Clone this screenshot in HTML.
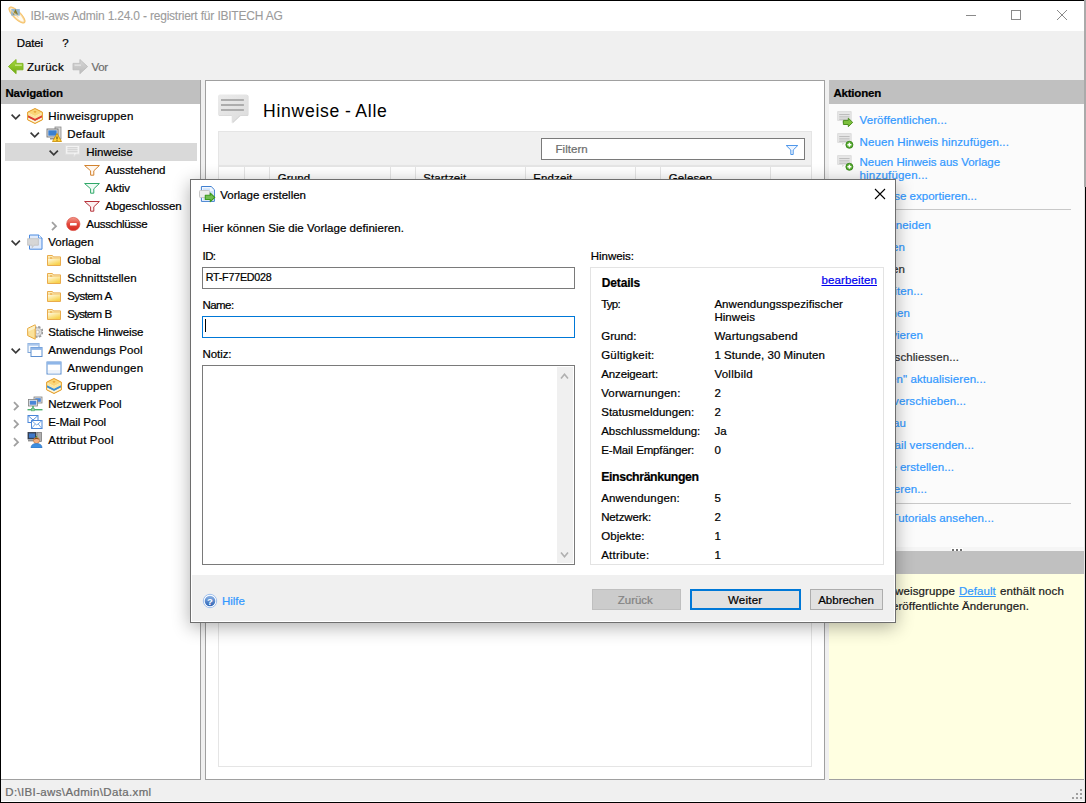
<!DOCTYPE html>
<html lang="de"><head><meta charset="utf-8"><title>IBI-aws Admin</title>
<style>
html,body{margin:0;padding:0;width:1086px;height:803px;overflow:hidden;background:#f0f0f0;}
body{position:relative;font-family:"Liberation Sans", sans-serif;font-size:12px;}
.b{position:absolute;display:block;}
.t{position:absolute;white-space:pre;display:block;-webkit-text-stroke:0.22px;}
</style></head><body>
<div class="b" style="left:0px;top:0px;width:1086px;height:803px;background:#000;"></div>
<div class="b" style="left:1px;top:1px;width:1083px;height:30px;background:#ffffff;"></div>
<div class="b" style="left:1px;top:31px;width:1083px;height:770px;background:#f0f0f0;"></div>
<div class="b" style="left:1px;top:801px;width:1083px;height:1px;background:#ffffff;"></div>
<div class="b" style="left:1084px;top:1px;width:1px;height:801px;background:#e4e4e4;"></div>
<div class="b" style="left:1084px;top:0px;width:2px;height:187px;background:#aaaaaa;"></div>
<div class="b" style="left:8px;top:6px;line-height:0;"><svg width="18" height="18" viewBox="0 0 18 18">
<ellipse cx="9" cy="9" rx="10.2" ry="3.3" transform="rotate(45 9 9)" fill="#fffaf0" stroke="#f9d596" stroke-width="1.9"/>
<ellipse cx="9" cy="9" rx="10.7" ry="3.8" transform="rotate(45 9 9)" fill="none" stroke="#f2b248" stroke-width="0.6" opacity="0.8"/>
<rect x="3.2" y="3" width="8.6" height="6.6" fill="#8db3d4" opacity="0.92"/>
<path d="M5.6 8.4 L7.5 4.4 L9.4 8.4 M6.4 7 H8.6" stroke="#8a7a20" stroke-width="1.1" fill="none"/>
<path d="M3 4.2 L10.5 11.5" stroke="#f9d596" stroke-width="1.1" opacity="0.75"/>
</svg></div>
<span class="t" style="left:30.50px;top:7.60px;font-size:12px;line-height:16px;color:#9b9b9b;letter-spacing:-0.238px;word-spacing:0.238px;-webkit-text-stroke:0.1px;">IBI-aws Admin 1.24.0 - registriert für IBITECH AG</span>
<svg class="b" style="left:960px;top:5px" width="120" height="22" viewBox="0 0 120 22"><g fill="none" stroke="#8a8a8a" stroke-width="1"><path d="M6 10.5 H16"/><rect x="51.5" y="5.5" width="9" height="9"/><path d="M97 5 L107 15 M107 5 L97 15"/></g></svg>
<span class="t" style="left:16.80px;top:34.90px;font-size:11.5px;line-height:16px;color:#000;letter-spacing:-0.152px;">Datei</span>
<span class="t" style="left:62.20px;top:34.90px;font-size:11.5px;line-height:16px;color:#000;letter-spacing:-1.606px;">?</span>
<div class="b" style="left:8px;top:59px;line-height:0;"><svg width="16" height="16" viewBox="0 0 16 16">
<defs><linearGradient id="gb" x1="0" y1="0" x2="0" y2="1"><stop offset="0" stop-color="#a6d63c"/><stop offset="0.5" stop-color="#8cc42a"/><stop offset="1" stop-color="#6ea814"/></linearGradient></defs>
<path d="M0.4 7.6 L8.1 0.5 L8.1 4.4 L15 4.4 L15 10.8 L8.1 10.8 L8.1 14.7 Z" fill="url(#gb)" stroke="#7db31e" stroke-width="0.9" stroke-linejoin="round"/>
<path d="M7 6.2 H13.8" stroke="#c9e886" stroke-width="1.4"/>
</svg></div>
<span class="t" style="left:27.00px;top:59.00px;font-size:11.5px;line-height:16px;color:#000;letter-spacing:0.307px;">Zurück</span>
<div class="b" style="left:71.5px;top:59px;line-height:0;"><svg width="16" height="16" viewBox="0 0 16 16">
<defs><linearGradient id="gf" x1="0" y1="0" x2="0" y2="1"><stop offset="0" stop-color="#d6d6d6"/><stop offset="1" stop-color="#bcbcbc"/></linearGradient></defs>
<path d="M15.6 7.6 L7.9 0.5 L7.9 4.4 L1 4.4 L1 10.8 L7.9 10.8 L7.9 14.7 Z" fill="url(#gf)" stroke="#bdbdbd" stroke-width="0.9" stroke-linejoin="round"/>
<path d="M2.6 6.2 H9" stroke="#e2e2e2" stroke-width="1.4"/>
</svg></div>
<span class="t" style="left:91.40px;top:59.00px;font-size:11.5px;line-height:16px;color:#6d6d6d;letter-spacing:-0.289px;">Vor</span>
<div class="b" style="left:1px;top:80px;width:200px;height:700px;background:#ffffff;"></div>
<div class="b" style="left:200px;top:80px;width:1px;height:700px;background:#a0a0a0;"></div>
<div class="b" style="left:1px;top:779px;width:200px;height:1px;background:#a0a0a0;"></div>
<div class="b" style="left:1px;top:80px;width:199px;height:24px;background:#c0c0c0;"></div>
<span class="t" style="left:5.40px;top:84.80px;font-size:11.5px;line-height:16px;color:#000;font-weight:bold;letter-spacing:-0.120px;">Navigation</span>
<div class="b" style="left:5px;top:143px;width:192px;height:18px;background:#d9d9d9;"></div>
<svg class="b" style="left:11px;top:113px" width="10" height="8" viewBox="0 0 10 8"><path d="M0.6 1.6 L4.75 5.8 L8.9 1.6" fill="none" stroke="#3a3a3a" stroke-width="1.7"/></svg>
<div class="b" style="left:27px;top:108px;line-height:0;"><svg width="16" height="16" viewBox="0 0 16 16">
<path d="M8 0.6 L15.4 4.3 L15.4 11.7 L8 15.4 L0.6 11.7 L0.6 4.3 Z" fill="#fdf3cf" stroke="#e6a63a" stroke-width="1" stroke-linejoin="round"/>
<path d="M1 4.5 L8 8 L15 4.5 L8 1 Z" fill="#f9d678"/>
<path d="M1 4.7 L8 8.2 L15 4.7 L15 7 L8 10.5 L1 7 Z" fill="#fbe59c"/>
<path d="M1 7.3 L8 10.8 L15 7.3 L15 9.6 L8 13.1 L1 9.6 Z" fill="#dc3d30"/>
<path d="M1 9.8 L8 13.3 L15 9.8 L15 11.6 L8 15 L1 11.6 Z" fill="#fdf6dc"/>
<path d="M6.4 3.8 L8 2.7 L9.6 3.8 L8 4.9Z" fill="#e6a63a"/>
<path d="M8 0.6 L15.4 4.3 L15.4 11.7 L8 15.4 L0.6 11.7 L0.6 4.3 Z" fill="none" stroke="#e6a63a" stroke-width="1" stroke-linejoin="round"/>
</svg></div>
<span class="t" style="left:48.30px;top:107.60px;font-size:11.5px;line-height:16px;color:#000;letter-spacing:0.195px;">Hinweisgruppen</span>
<svg class="b" style="left:30px;top:131px" width="10" height="8" viewBox="0 0 10 8"><path d="M0.6 1.6 L4.75 5.8 L8.9 1.6" fill="none" stroke="#3a3a3a" stroke-width="1.7"/></svg>
<div class="b" style="left:46px;top:126px;line-height:0;"><svg width="16" height="16" viewBox="0 0 16 16">
<rect x="9" y="1" width="6" height="12" fill="#d8d8d8" stroke="#8a8a8a" stroke-width="0.8"/>
<rect x="1" y="3" width="11" height="8" fill="#e8e8e8" stroke="#707070" stroke-width="0.9"/>
<rect x="2.3" y="4.3" width="8.4" height="5.4" fill="#3b7fd0"/>
<rect x="4" y="12" width="5" height="1.5" fill="#909090"/>
<path d="M11 7.5 L15.5 15.5 L6.5 15.5 Z" fill="#ffd23b" stroke="#c98a00" stroke-width="0.8"/>
<rect x="10.5" y="10.5" width="1" height="2.6" fill="#5a3c00"/><rect x="10.5" y="13.7" width="1" height="1" fill="#5a3c00"/>
</svg></div>
<span class="t" style="left:67.30px;top:125.60px;font-size:11.5px;line-height:16px;color:#000;letter-spacing:0.180px;">Default</span>
<svg class="b" style="left:49px;top:149px" width="10" height="8" viewBox="0 0 10 8"><path d="M0.6 1.6 L4.75 5.8 L8.9 1.6" fill="none" stroke="#3a3a3a" stroke-width="1.7"/></svg>
<div class="b" style="left:65px;top:144px;line-height:0;"><svg width="16" height="16" viewBox="0 0 16 16">
<path d="M0.5 1.5 H14.5 V10.2 H11 L8.8 13 L8.8 10.2 H0.5 Z" fill="#f3f3f3" stroke="#dedede" stroke-width="0.9" stroke-linejoin="round"/>
<path d="M2.4 3.8 H12.6 M2.4 5.8 H12.6 M2.4 7.8 H12.6" stroke="#c9c9c9" stroke-width="1"/>
</svg></div>
<span class="t" style="left:86.30px;top:143.60px;font-size:11.5px;line-height:16px;color:#000;letter-spacing:-0.046px;">Hinweise</span>
<div class="b" style="left:84px;top:162px;line-height:0;"><svg width="16" height="16" viewBox="0 0 16 16"><path d="M0.6 3.5 H15.4 L9.8 8.8 V13.2 H6.6 V8.8 Z" fill="#fff8f0" stroke="#d2822e" stroke-width="1" stroke-linejoin="round"/></svg></div>
<span class="t" style="left:105.30px;top:161.60px;font-size:11.5px;line-height:16px;color:#000;letter-spacing:-0.065px;">Ausstehend</span>
<div class="b" style="left:84px;top:180px;line-height:0;"><svg width="16" height="16" viewBox="0 0 16 16"><path d="M0.6 3.5 H15.4 L9.8 8.8 V13.2 H6.6 V8.8 Z" fill="#f0fbf5" stroke="#2fa868" stroke-width="1" stroke-linejoin="round"/></svg></div>
<span class="t" style="left:105.30px;top:179.60px;font-size:11.5px;line-height:16px;color:#000;letter-spacing:-0.044px;">Aktiv</span>
<div class="b" style="left:84px;top:198px;line-height:0;"><svg width="16" height="16" viewBox="0 0 16 16"><path d="M0.6 3.5 H15.4 L9.8 8.8 V13.2 H6.6 V8.8 Z" fill="#fdf1f1" stroke="#b6323a" stroke-width="1" stroke-linejoin="round"/></svg></div>
<span class="t" style="left:105.30px;top:197.60px;font-size:11.5px;line-height:16px;color:#000;letter-spacing:-0.146px;">Abgeschlossen</span>
<svg class="b" style="left:51px;top:221px" width="7" height="10" viewBox="0 0 7 10"><path d="M1 1.2 L5 5.2 L1 9.2" fill="none" stroke="#a0a0a0" stroke-width="1.8"/></svg>
<div class="b" style="left:65px;top:216px;line-height:0;"><svg width="16" height="16" viewBox="0 0 16 16">
<defs><linearGradient id="gs" x1="0" y1="0" x2="0" y2="1"><stop offset="0" stop-color="#f39a8c"/><stop offset="0.5" stop-color="#e4483c"/><stop offset="1" stop-color="#d6291f"/></linearGradient></defs>
<circle cx="8.3" cy="8" r="6.6" fill="url(#gs)" stroke="#d9493e" stroke-width="0.7"/>
<rect x="5" y="7" width="6.7" height="2.5" rx="0.5" fill="#ffffff"/>
</svg></div>
<span class="t" style="left:86.30px;top:215.60px;font-size:11.5px;line-height:16px;color:#000;letter-spacing:-0.324px;">Ausschlüsse</span>
<svg class="b" style="left:11px;top:239px" width="10" height="8" viewBox="0 0 10 8"><path d="M0.6 1.6 L4.75 5.8 L8.9 1.6" fill="none" stroke="#3a3a3a" stroke-width="1.7"/></svg>
<div class="b" style="left:27px;top:234px;line-height:0;"><svg width="16" height="16" viewBox="0 0 16 16">
<path d="M2.5 1 H11.5 L15 4 V15.2 H2.5 Z" fill="#dfeafb" stroke="#4a8ae0" stroke-width="1" stroke-linejoin="round"/>
<path d="M11.5 1 V4 H15" fill="#ffffff" stroke="#4a8ae0" stroke-width="0.8"/>
<path d="M0.6 4.7 H11.4 V11.2 H7 L5.2 13.7 V11.2 H0.6 Z" fill="#d6d6d6" stroke="#c0c0c0" stroke-width="0.8" stroke-linejoin="round"/>
</svg></div>
<span class="t" style="left:48.30px;top:233.60px;font-size:11.5px;line-height:16px;color:#000;letter-spacing:-0.013px;">Vorlagen</span>
<div class="b" style="left:46px;top:252px;line-height:0;"><svg width="16" height="16" viewBox="0 0 16 16">
<defs><linearGradient id="gfo" x1="0" y1="0" x2="0.6" y2="1"><stop offset="0" stop-color="#fffbe8"/><stop offset="1" stop-color="#f8d24e"/></linearGradient></defs>
<path d="M1.5 3.5 H6.4 L7.4 4.9 H14.5 V13.5 H1.5 Z" fill="#fdeeb8" stroke="#e9ab4c" stroke-width="1" stroke-linejoin="round"/>
<path d="M2 6.6 H14 V13 H2 Z" fill="url(#gfo)"/>
<path d="M2 6.2 H14" stroke="#f2c46a" stroke-width="0.8"/>
<rect x="4" y="5.2" width="2.2" height="1.6" fill="#e9ab4c" opacity="0.8"/>
</svg></div>
<span class="t" style="left:67.30px;top:251.60px;font-size:11.5px;line-height:16px;color:#000;letter-spacing:0.025px;">Global</span>
<div class="b" style="left:46px;top:270px;line-height:0;"><svg width="16" height="16" viewBox="0 0 16 16">
<defs><linearGradient id="gfo" x1="0" y1="0" x2="0.6" y2="1"><stop offset="0" stop-color="#fffbe8"/><stop offset="1" stop-color="#f8d24e"/></linearGradient></defs>
<path d="M1.5 3.5 H6.4 L7.4 4.9 H14.5 V13.5 H1.5 Z" fill="#fdeeb8" stroke="#e9ab4c" stroke-width="1" stroke-linejoin="round"/>
<path d="M2 6.6 H14 V13 H2 Z" fill="url(#gfo)"/>
<path d="M2 6.2 H14" stroke="#f2c46a" stroke-width="0.8"/>
<rect x="4" y="5.2" width="2.2" height="1.6" fill="#e9ab4c" opacity="0.8"/>
</svg></div>
<span class="t" style="left:67.30px;top:269.60px;font-size:11.5px;line-height:16px;color:#000;letter-spacing:0.064px;">Schnittstellen</span>
<div class="b" style="left:46px;top:288px;line-height:0;"><svg width="16" height="16" viewBox="0 0 16 16">
<defs><linearGradient id="gfo" x1="0" y1="0" x2="0.6" y2="1"><stop offset="0" stop-color="#fffbe8"/><stop offset="1" stop-color="#f8d24e"/></linearGradient></defs>
<path d="M1.5 3.5 H6.4 L7.4 4.9 H14.5 V13.5 H1.5 Z" fill="#fdeeb8" stroke="#e9ab4c" stroke-width="1" stroke-linejoin="round"/>
<path d="M2 6.6 H14 V13 H2 Z" fill="url(#gfo)"/>
<path d="M2 6.2 H14" stroke="#f2c46a" stroke-width="0.8"/>
<rect x="4" y="5.2" width="2.2" height="1.6" fill="#e9ab4c" opacity="0.8"/>
</svg></div>
<span class="t" style="left:67.30px;top:287.60px;font-size:11.5px;line-height:16px;color:#000;letter-spacing:-0.611px;word-spacing:0.611px;">System A</span>
<div class="b" style="left:46px;top:306px;line-height:0;"><svg width="16" height="16" viewBox="0 0 16 16">
<defs><linearGradient id="gfo" x1="0" y1="0" x2="0.6" y2="1"><stop offset="0" stop-color="#fffbe8"/><stop offset="1" stop-color="#f8d24e"/></linearGradient></defs>
<path d="M1.5 3.5 H6.4 L7.4 4.9 H14.5 V13.5 H1.5 Z" fill="#fdeeb8" stroke="#e9ab4c" stroke-width="1" stroke-linejoin="round"/>
<path d="M2 6.6 H14 V13 H2 Z" fill="url(#gfo)"/>
<path d="M2 6.2 H14" stroke="#f2c46a" stroke-width="0.8"/>
<rect x="4" y="5.2" width="2.2" height="1.6" fill="#e9ab4c" opacity="0.8"/>
</svg></div>
<span class="t" style="left:67.30px;top:305.60px;font-size:11.5px;line-height:16px;color:#000;letter-spacing:-0.703px;word-spacing:0.703px;">System B</span>
<div class="b" style="left:27px;top:324px;line-height:0;"><svg width="16" height="16" viewBox="0 0 16 16">
<circle cx="10.6" cy="8" r="4.7" fill="none" stroke="#9a9a9a" stroke-width="2.6" stroke-dasharray="2.1 1.59"/>
<circle cx="10.6" cy="8" r="4.3" fill="#dedede" stroke="#a4a4a4" stroke-width="0.8"/>
<circle cx="10.6" cy="8" r="1.7" fill="#f8f8f8" stroke="#a4a4a4" stroke-width="0.6"/>
<path d="M8.2 0.8 L0.7 4.4 V11.6 L8.2 15.2 Z" fill="#fbe29a" stroke="#e6a63a" stroke-width="1" stroke-linejoin="round"/>
<path d="M8 1.6 L1.4 4.8 V7.4 L8 4.4 Z" fill="#fdf1c6"/>
</svg></div>
<span class="t" style="left:48.30px;top:323.60px;font-size:11.5px;line-height:16px;color:#000;letter-spacing:-0.127px;word-spacing:0.127px;">Statische Hinweise</span>
<svg class="b" style="left:11px;top:347px" width="10" height="8" viewBox="0 0 10 8"><path d="M0.6 1.6 L4.75 5.8 L8.9 1.6" fill="none" stroke="#3a3a3a" stroke-width="1.7"/></svg>
<div class="b" style="left:27px;top:342px;line-height:0;"><svg width="16" height="16" viewBox="0 0 16 16">
<rect x="1" y="1.5" width="11" height="9" fill="#f4f8fd" stroke="#7fa6d8" stroke-width="1"/>
<rect x="1" y="1.5" width="11" height="2.2" fill="#a9c6ec"/>
<rect x="4" y="5.5" width="11" height="9" fill="#ffffff" stroke="#5d8fd0" stroke-width="1"/>
<rect x="4" y="5.5" width="11" height="2.4" fill="#8fb6e8"/>
</svg></div>
<span class="t" style="left:48.30px;top:341.60px;font-size:11.5px;line-height:16px;color:#000;letter-spacing:0.120px;word-spacing:-0.120px;">Anwendungs Pool</span>
<div class="b" style="left:46px;top:360px;line-height:0;"><svg width="16" height="16" viewBox="0 0 16 16">
<rect x="1" y="2" width="14" height="12" fill="#ffffff" stroke="#5d8fd0" stroke-width="1"/>
<rect x="1" y="2" width="14" height="2.6" fill="#8fb6e8"/>
<rect x="2" y="10" width="12" height="3.4" fill="#eef3fa"/>
</svg></div>
<span class="t" style="left:67.30px;top:359.60px;font-size:11.5px;line-height:16px;color:#000;letter-spacing:0.223px;">Anwendungen</span>
<div class="b" style="left:46px;top:378px;line-height:0;"><svg width="16" height="16" viewBox="0 0 16 16">
<path d="M8 0.6 L15.4 4.3 L15.4 11.7 L8 15.4 L0.6 11.7 L0.6 4.3 Z" fill="#fdf3cf" stroke="#e6a63a" stroke-width="1" stroke-linejoin="round"/>
<path d="M1 4.5 L8 8 L15 4.5 L8 1 Z" fill="#f9d678"/>
<path d="M1 4.7 L8 8.2 L15 4.7 L15 7 L8 10.5 L1 7 Z" fill="#fbe59c"/>
<path d="M1 7.3 L8 10.8 L15 7.3 L15 9.6 L8 13.1 L1 9.6 Z" fill="#3d8fd1"/>
<path d="M1 9.8 L8 13.3 L15 9.8 L15 11.6 L8 15 L1 11.6 Z" fill="#fdf6dc"/>
<path d="M6.4 3.8 L8 2.7 L9.6 3.8 L8 4.9Z" fill="#e6a63a"/>
<path d="M8 0.6 L15.4 4.3 L15.4 11.7 L8 15.4 L0.6 11.7 L0.6 4.3 Z" fill="none" stroke="#e6a63a" stroke-width="1" stroke-linejoin="round"/>
</svg></div>
<span class="t" style="left:67.30px;top:377.60px;font-size:11.5px;line-height:16px;color:#000;letter-spacing:0.033px;">Gruppen</span>
<svg class="b" style="left:13px;top:401px" width="7" height="10" viewBox="0 0 7 10"><path d="M1 1.2 L5 5.2 L1 9.2" fill="none" stroke="#a0a0a0" stroke-width="1.8"/></svg>
<div class="b" style="left:27px;top:396px;line-height:0;"><svg width="16" height="16" viewBox="0 0 16 16">
<rect x="7" y="1" width="8" height="6" fill="#e6e6e6" stroke="#808080" stroke-width="0.8"/>
<rect x="8.2" y="2.2" width="5.6" height="3.6" fill="#4a86d8"/>
<rect x="1.5" y="3.5" width="9" height="6.5" fill="#e6e6e6" stroke="#808080" stroke-width="0.8"/>
<rect x="2.8" y="4.8" width="6.4" height="3.9" fill="#4a86d8"/>
<rect x="5.2" y="10" width="1.6" height="3" fill="#4cae6a"/>
<rect x="0.5" y="13" width="15" height="1.4" fill="#4cae6a"/>
<rect x="4.5" y="12.3" width="3" height="2.6" fill="#9ad0a8" stroke="#4cae6a" stroke-width="0.5"/>
</svg></div>
<span class="t" style="left:48.30px;top:395.60px;font-size:11.5px;line-height:16px;color:#000;letter-spacing:-0.078px;word-spacing:0.078px;">Netzwerk Pool</span>
<svg class="b" style="left:13px;top:419px" width="7" height="10" viewBox="0 0 7 10"><path d="M1 1.2 L5 5.2 L1 9.2" fill="none" stroke="#a0a0a0" stroke-width="1.8"/></svg>
<div class="b" style="left:27px;top:414px;line-height:0;"><svg width="16" height="16" viewBox="0 0 16 16">
<rect x="1" y="1.5" width="10" height="7" fill="#ffffff" stroke="#4a86d8" stroke-width="1"/>
<path d="M1 1.5 L6 6 L11 1.5" fill="none" stroke="#4a86d8" stroke-width="0.9"/>
<rect x="4.5" y="6.5" width="10.5" height="8" fill="#ffffff" stroke="#4a86d8" stroke-width="1"/>
<path d="M4.5 6.5 L9.75 11 L15 6.5 M4.5 14.5 L8.3 10 M15 14.5 L11.2 10" fill="none" stroke="#6a9fe0" stroke-width="0.9"/>
</svg></div>
<span class="t" style="left:48.30px;top:413.60px;font-size:11.5px;line-height:16px;color:#000;letter-spacing:-0.121px;word-spacing:0.121px;">E-Mail Pool</span>
<svg class="b" style="left:13px;top:437px" width="7" height="10" viewBox="0 0 7 10"><path d="M1 1.2 L5 5.2 L1 9.2" fill="none" stroke="#a0a0a0" stroke-width="1.8"/></svg>
<div class="b" style="left:27px;top:432px;line-height:0;"><svg width="16" height="16" viewBox="0 0 16 16">
<rect x="1" y="0.5" width="8" height="6.5" fill="#3c4a60" stroke="#2a3446" stroke-width="0.8"/>
<rect x="2" y="1.5" width="6" height="4.3" fill="#3f78c8"/>
<rect x="10" y="0.5" width="4.5" height="9" fill="#b0b0b0" stroke="#707070" stroke-width="0.7"/>
<rect x="1" y="7.8" width="8" height="1.6" fill="#909090"/>
<circle cx="9.5" cy="8.5" r="3" fill="#f4b183" stroke="#c5712a" stroke-width="0.6"/>
<path d="M6.5 7.5 Q9.5 4 12.5 7.5 Q9.5 6.5 6.5 7.5Z" fill="#8a4a14"/>
<path d="M4 16 Q4 11.5 9.5 11.5 Q15 11.5 15 16 Z" fill="#3d8fe0" stroke="#2a6ab8" stroke-width="0.6"/>
<rect x="9" y="4" width="1" height="1.5" fill="#3aa03a"/>
</svg></div>
<span class="t" style="left:48.30px;top:431.60px;font-size:11.5px;line-height:16px;color:#000;letter-spacing:0.237px;word-spacing:-0.237px;">Attribut Pool</span>
<div class="b" style="left:205px;top:80px;width:620px;height:700px;background:#ffffff;border:1px solid #a0a0a0;box-sizing:border-box;"></div>
<div class="b" style="left:218px;top:94px;line-height:0;"><svg width="32" height="32" viewBox="0 0 32 32">
<defs><linearGradient id="bg1" x1="0" y1="0" x2="1" y2="1"><stop offset="0" stop-color="#ebebeb"/><stop offset="1" stop-color="#dcdcdc"/></linearGradient>
<filter id="bs" x="-10%" y="-10%" width="125%" height="125%"><feGaussianBlur stdDeviation="0.7"/></filter></defs>
<path d="M2 1 H29 Q30.5 1 30.5 2.5 V20.5 Q30.5 22 29 22 H22.5 L14.5 29.6 V22 H2 Q0.5 22 0.5 20.5 V2.5 Q0.5 1 2 1 Z" fill="#cfcfcf" filter="url(#bs)" opacity="0.9"/>
<path d="M1.8 0.4 H28.4 Q29.9 0.4 29.9 1.9 V19.9 Q29.9 21.4 28.4 21.4 H21.7 L13.7 28.9 V21.4 H1.8 Q0.3 21.4 0.3 19.9 V1.9 Q0.3 0.4 1.8 0.4 Z" fill="url(#bg1)"/>
<path d="M3 6 H25.9 M3 10.9 H25.9 M3 15.9 H25.9" stroke="#adadad" stroke-width="2"/>
</svg></div>
<span class="t" style="left:263.00px;top:99.60px;font-size:17.6px;line-height:23px;color:#000;letter-spacing:0.701px;word-spacing:-0.701px;-webkit-text-stroke:0;">Hinweise - Alle</span>
<div class="b" style="left:218px;top:131px;width:594px;height:35px;background:#f0f0f0;border:1px solid #e5e5e5;box-sizing:border-box;"></div>
<div class="b" style="left:541px;top:138px;width:264px;height:22px;background:#ffffff;border:1px solid #7a7a7a;box-sizing:border-box;"></div>
<span class="t" style="left:555.50px;top:141.40px;font-size:11.5px;line-height:16px;color:#6d6d6d;letter-spacing:0.050px;">Filtern</span>
<div class="b" style="left:785px;top:144px;line-height:0;"><svg width="14" height="12" viewBox="0 0 14 12"><path d="M1.2 1.5 H12.8 L8.2 6 V10.5 H5.8 V6 Z" fill="#eef5ff" stroke="#4f97ea" stroke-width="1" stroke-linejoin="round"/></svg></div>
<div class="b" style="left:218px;top:166px;width:594px;height:601px;background:#ffffff;border:1px solid #e5e5e5;box-sizing:border-box;"></div>
<div class="b" style="left:244px;top:166px;width:1px;height:20px;background:#e5e5e5;"></div>
<div class="b" style="left:269px;top:166px;width:1px;height:20px;background:#e5e5e5;"></div>
<div class="b" style="left:390px;top:166px;width:1px;height:20px;background:#e5e5e5;"></div>
<div class="b" style="left:415px;top:166px;width:1px;height:20px;background:#e5e5e5;"></div>
<div class="b" style="left:525px;top:166px;width:1px;height:20px;background:#e5e5e5;"></div>
<div class="b" style="left:635px;top:166px;width:1px;height:20px;background:#e5e5e5;"></div>
<div class="b" style="left:660px;top:166px;width:1px;height:20px;background:#e5e5e5;"></div>
<div class="b" style="left:770px;top:166px;width:1px;height:20px;background:#e5e5e5;"></div>
<span class="t" style="left:277.70px;top:170.30px;font-size:11.5px;line-height:16px;color:#000;letter-spacing:0.111px;">Grund</span>
<span class="t" style="left:423.30px;top:170.30px;font-size:11.5px;line-height:16px;color:#000;letter-spacing:0.082px;">Startzeit</span>
<span class="t" style="left:533.30px;top:170.30px;font-size:11.5px;line-height:16px;color:#000;letter-spacing:0.095px;">Endzeit</span>
<span class="t" style="left:668.80px;top:170.30px;font-size:11.5px;line-height:16px;color:#000;letter-spacing:0.106px;">Gelesen</span>
<div class="b" style="left:829px;top:80px;width:255px;height:467px;background:#fbfbfb;"></div>
<div class="b" style="left:829px;top:80px;width:255px;height:24px;background:#c0c0c0;"></div>
<span class="t" style="left:833.40px;top:84.90px;font-size:11.5px;line-height:16px;color:#000;font-weight:bold;letter-spacing:-0.200px;">Aktionen</span>
<div class="b" style="left:837px;top:111px;line-height:0;"><svg width="17" height="17" viewBox="0 0 17 17"><path d="M0.6 0.6 H14.2 V9.4 H7.6 L5.6 11.6 V9.4 H0.6 Z" fill="#e7e7e7" stroke="#d8d8d8" stroke-width="0.8" stroke-linejoin="round"/>
<path d="M2.2 3.6 H12.6 M2.2 5.9 H12.6 M2.2 8.2 H12.6" stroke="#b9b9b9" stroke-width="1"/>
<path d="M15.7 11.4 L11.3 7.2 V9.4 H6.4 V13.5 H11.3 V15.7 Z" fill="#7cc03c" stroke="#4b8f1e" stroke-width="1" stroke-linejoin="round"/>
</svg></div>
<span class="t" style="left:859.50px;top:112.00px;font-size:11.5px;line-height:16px;color:#3399ff;letter-spacing:0.113px;">Veröffentlichen...</span>
<div class="b" style="left:837px;top:133px;line-height:0;"><svg width="17" height="17" viewBox="0 0 17 17"><path d="M0.6 0.6 H14.2 V9.4 H7.6 L5.6 11.6 V9.4 H0.6 Z" fill="#e7e7e7" stroke="#d8d8d8" stroke-width="0.8" stroke-linejoin="round"/>
<path d="M2.2 3.6 H12.6 M2.2 5.9 H12.6 M2.2 8.2 H12.6" stroke="#b9b9b9" stroke-width="1"/>
<circle cx="12.4" cy="11.8" r="3.5" fill="#58ae2e" stroke="#35821a" stroke-width="0.9"/>
<path d="M12.4 9.8 V13.8 M10.4 11.8 H14.4" stroke="#ffffff" stroke-width="1.5"/>
</svg></div>
<span class="t" style="left:859.50px;top:134.00px;font-size:11.5px;line-height:16px;color:#3399ff;letter-spacing:0.124px;word-spacing:-0.124px;">Neuen Hinweis hinzufügen...</span>
<div class="b" style="left:837px;top:155px;line-height:0;"><svg width="17" height="17" viewBox="0 0 17 17"><path d="M0.6 0.6 H14.2 V9.4 H7.6 L5.6 11.6 V9.4 H0.6 Z" fill="#e7e7e7" stroke="#d8d8d8" stroke-width="0.8" stroke-linejoin="round"/>
<path d="M2.2 3.6 H12.6 M2.2 5.9 H12.6 M2.2 8.2 H12.6" stroke="#b9b9b9" stroke-width="1"/>
<circle cx="12.4" cy="11.8" r="3.5" fill="#58ae2e" stroke="#35821a" stroke-width="0.9"/>
<path d="M12.4 9.8 V13.8 M10.4 11.8 H14.4" stroke="#ffffff" stroke-width="1.5"/>
</svg></div>
<span class="t" style="left:859.50px;top:154.00px;font-size:11.5px;line-height:16px;color:#3399ff;letter-spacing:-0.036px;word-spacing:0.036px;">Neuen Hinweis aus Vorlage</span>
<span class="t" style="left:859.50px;top:167.00px;font-size:11.5px;line-height:16px;color:#3399ff;letter-spacing:0.203px;">hinzufügen...</span>
<span class="t" style="left:859.50px;top:188.00px;font-size:11.5px;line-height:16px;color:#3399ff;letter-spacing:0.023px;word-spacing:-0.023px;">Hinweise exportieren...</span>
<div class="b" style="left:843px;top:209px;width:228px;height:1px;background:#c8c8c8;"></div>
<span class="t" style="left:857.49px;top:217.00px;font-size:11.5px;line-height:16px;color:#3399ff;letter-spacing:0.105px;">Ausschneiden</span>
<span class="t" style="left:858.15px;top:239.00px;font-size:11.5px;line-height:16px;color:#3399ff;letter-spacing:0.100px;">Kopieren</span>
<span class="t" style="left:858.80px;top:261.00px;font-size:11.5px;line-height:16px;color:#303030;letter-spacing:0.099px;">Einfügen</span>
<span class="t" style="left:856.65px;top:283.00px;font-size:11.5px;line-height:16px;color:#3399ff;letter-spacing:0.087px;">Bearbeiten...</span>
<span class="t" style="left:865.76px;top:305.00px;font-size:11.5px;line-height:16px;color:#3399ff;letter-spacing:0.108px;">Löschen</span>
<span class="t" style="left:871.62px;top:327.00px;font-size:11.5px;line-height:16px;color:#3399ff;letter-spacing:0.088px;">Aktivieren</span>
<span class="t" style="left:880.30px;top:349.00px;font-size:11.5px;line-height:16px;color:#303030;letter-spacing:0.090px;">Abschliessen...</span>
<span class="t" style="left:855.42px;top:371.00px;font-size:11.5px;line-height:16px;color:#3399ff;letter-spacing:0.089px;word-spacing:-0.089px;">&quot;Gelesen&quot; aktualisieren...</span>
<span class="t" style="left:870.40px;top:393.00px;font-size:11.5px;line-height:16px;color:#3399ff;letter-spacing:0.091px;word-spacing:-0.091px;">Zeit verschieben...</span>
<span class="t" style="left:857.21px;top:415.00px;font-size:11.5px;line-height:16px;color:#3399ff;letter-spacing:0.104px;">Vorschau</span>
<span class="t" style="left:873.20px;top:437.00px;font-size:11.5px;line-height:16px;color:#3399ff;letter-spacing:0.096px;word-spacing:-0.096px;">E-Mail versenden...</span>
<span class="t" style="left:857.08px;top:459.00px;font-size:11.5px;line-height:16px;color:#3399ff;letter-spacing:0.087px;word-spacing:-0.087px;">Vorlage erstellen...</span>
<span class="t" style="left:858.07px;top:481.00px;font-size:11.5px;line-height:16px;color:#3399ff;letter-spacing:0.084px;">Importieren...</span>
<div class="b" style="left:843px;top:503px;width:228px;height:1px;background:#c8c8c8;"></div>
<span class="t" style="left:858.91px;top:510.00px;font-size:11.5px;line-height:16px;color:#3399ff;letter-spacing:0.096px;word-spacing:-0.096px;">Video Tutorials ansehen...</span>
<div class="b" style="left:829px;top:547px;width:255px;height:4px;background:#f5f5f5;"></div>
<div class="b" style="left:951px;top:548px;width:4px;height:4px;background:#ffffff;"></div>
<div class="b" style="left:955px;top:548px;width:4px;height:4px;background:#ffffff;"></div>
<div class="b" style="left:959px;top:548px;width:4px;height:4px;background:#ffffff;"></div>
<div class="b" style="left:952px;top:549px;width:2px;height:2px;background:#707070;"></div>
<div class="b" style="left:956px;top:549px;width:2px;height:2px;background:#707070;"></div>
<div class="b" style="left:960px;top:549px;width:2px;height:2px;background:#707070;"></div>
<div class="b" style="left:829px;top:551px;width:255px;height:23px;background:#c0c0c0;"></div>
<div class="b" style="left:829px;top:574px;width:255px;height:205px;background:#ffffe1;"></div>
<div class="b" style="left:829px;top:779px;width:255px;height:1px;background:#a0a0a0;"></div>
<span class="t" style="left:856.79px;top:582.90px;font-size:11.5px;line-height:16px;color:#202020;letter-spacing:0.105px;word-spacing:-0.105px;">Die Hinweisgruppe</span>
<span class="t" style="left:959.00px;top:582.90px;font-size:11.5px;line-height:16px;color:#3399ff;letter-spacing:0.052px;text-decoration:underline;">Default</span>
<span class="t" style="left:1000.00px;top:582.90px;font-size:11.5px;line-height:16px;color:#202020;letter-spacing:0.121px;word-spacing:-0.121px;">enthält noch</span>
<span class="t" style="left:873.10px;top:598.00px;font-size:11.5px;line-height:16px;color:#202020;letter-spacing:0.095px;word-spacing:-0.095px;">unveröffentlichte Änderungen.</span>
<span class="t" style="left:5.30px;top:783.50px;font-size:11.5px;line-height:16px;color:#6d6d6d;letter-spacing:0.352px;">D:\IBI-aws\Admin\Data.xml</span>
<div class="b" style="left:1080px;top:789px;width:2px;height:2px;background:#a0a0a0;"></div>
<div class="b" style="left:1076px;top:793px;width:2px;height:2px;background:#a0a0a0;"></div>
<div class="b" style="left:1080px;top:793px;width:2px;height:2px;background:#a0a0a0;"></div>
<div class="b" style="left:1072px;top:797px;width:2px;height:2px;background:#a0a0a0;"></div>
<div class="b" style="left:1076px;top:797px;width:2px;height:2px;background:#a0a0a0;"></div>
<div class="b" style="left:1080px;top:797px;width:2px;height:2px;background:#a0a0a0;"></div>
<div class="b" style="left:190px;top:179px;width:706px;height:444px;background:#ffffff;border:1px solid #6e6e6e;box-sizing:border-box;box-shadow:0 4px 17px rgba(0,0,0,0.32);"></div>
<div class="b" style="left:192px;top:575px;width:702px;height:46px;background:#f0f0f0;"></div>
<div class="b" style="left:199px;top:186px;line-height:0;"><svg width="17" height="17" viewBox="0 0 17 17">
<path d="M2.4 0.5 H12.2 L15.4 3.7 V15.4 H2.4 Z" fill="#f2f7fe" stroke="#3f7fd0" stroke-width="1" stroke-linejoin="round"/>
<path d="M4 2.2 H11 V5 H14 V14 H4 Z" fill="#cfe3fb"/>
<rect x="0.5" y="4.5" width="10" height="7" rx="0.9" fill="#ececec" stroke="#c2c2c2" stroke-width="0.9"/>
<path d="M15.8 11.4 L11.3 7.1 V9.3 H6.3 V13.5 H11.3 V15.7 Z" fill="#72bc52" stroke="#3a9a1a" stroke-width="1.1" stroke-linejoin="round"/>
</svg></div>
<span class="t" style="left:220.30px;top:186.60px;font-size:11.5px;line-height:16px;color:#000;letter-spacing:0.002px;word-spacing:-0.002px;">Vorlage erstellen</span>
<svg class="b" style="left:873px;top:187px" width="14" height="14" viewBox="0 0 14 14"><path d="M2 2 L12 12 M12 2 L2 12" fill="none" stroke="#000" stroke-width="1.1"/></svg>
<span class="t" style="left:202.40px;top:219.70px;font-size:11.5px;line-height:16px;color:#000;letter-spacing:0.063px;word-spacing:-0.063px;">Hier können Sie die Vorlage definieren.</span>
<span class="t" style="left:202.50px;top:247.70px;font-size:11.5px;line-height:16px;color:#000;letter-spacing:-0.568px;">ID:</span>
<div class="b" style="left:202px;top:267px;width:373px;height:22px;background:#ffffff;border:1px solid #7a7a7a;box-sizing:border-box;"></div>
<span class="t" style="left:205.70px;top:269.50px;font-size:10.7px;line-height:15px;color:#000;letter-spacing:-0.202px;">RT-F77ED028</span>
<span class="t" style="left:202.50px;top:296.50px;font-size:11.5px;line-height:16px;color:#000;letter-spacing:-0.575px;">Name:</span>
<div class="b" style="left:202px;top:316px;width:373px;height:22px;background:#ffffff;border:1px solid #0078d7;box-sizing:border-box;"></div>
<div class="b" style="left:205px;top:319px;width:1px;height:13px;background:#000;"></div>
<span class="t" style="left:202.50px;top:345.60px;font-size:11.5px;line-height:16px;color:#000;letter-spacing:-0.068px;">Notiz:</span>
<div class="b" style="left:202px;top:365px;width:373px;height:200px;background:#ffffff;border:1px solid #7a7a7a;box-sizing:border-box;"></div>
<div class="b" style="left:557px;top:367px;width:16px;height:196px;background:#f0f0f0;"></div>
<svg class="b" style="left:560px;top:372px" width="9" height="8" viewBox="0 0 9 8"><path d="M1 6.4 L4.5 2.2 L8 6.4" fill="none" stroke="#b0b0b0" stroke-width="1.6"/></svg>
<svg class="b" style="left:560px;top:551px" width="9" height="8" viewBox="0 0 9 8"><path d="M1 1.6 L4.5 5.8 L8 1.6" fill="none" stroke="#b0b0b0" stroke-width="1.6"/></svg>
<span class="t" style="left:590.80px;top:247.90px;font-size:11.5px;line-height:16px;color:#000;letter-spacing:-0.034px;">Hinweis:</span>
<div class="b" style="left:590px;top:267px;width:294px;height:298px;background:#ffffff;border:1px solid #e3e3e3;box-sizing:border-box;"></div>
<span class="t" style="left:601.80px;top:275.20px;font-size:12px;line-height:16px;color:#000;font-weight:bold;letter-spacing:-0.166px;">Details</span>
<span class="t" style="left:821.50px;top:271.60px;font-size:11.5px;line-height:16px;color:#0000ee;letter-spacing:0.114px;text-decoration:underline;">bearbeiten</span>
<span class="t" style="left:601.20px;top:295.70px;font-size:11.5px;line-height:16px;color:#000;letter-spacing:-0.734px;">Typ:</span>
<span class="t" style="left:714.40px;top:295.70px;font-size:11.5px;line-height:16px;color:#000;letter-spacing:0.063px;">Anwendungsspezifischer</span>
<span class="t" style="left:714.40px;top:308.70px;font-size:11.5px;line-height:16px;color:#000;letter-spacing:0.048px;">Hinweis</span>
<span class="t" style="left:601.20px;top:327.60px;font-size:11.5px;line-height:16px;color:#000;letter-spacing:0.021px;">Grund:</span>
<span class="t" style="left:714.40px;top:327.60px;font-size:11.5px;line-height:16px;color:#000;letter-spacing:0.218px;">Wartungsabend</span>
<span class="t" style="left:601.20px;top:346.60px;font-size:11.5px;line-height:16px;color:#000;letter-spacing:0.196px;">Gültigkeit:</span>
<span class="t" style="left:714.40px;top:346.60px;font-size:11.5px;line-height:16px;color:#000;letter-spacing:0.074px;word-spacing:-0.074px;">1 Stunde, 30 Minuten</span>
<span class="t" style="left:601.20px;top:365.60px;font-size:11.5px;line-height:16px;color:#000;letter-spacing:-0.126px;">Anzeigeart:</span>
<span class="t" style="left:714.40px;top:365.60px;font-size:11.5px;line-height:16px;color:#000;letter-spacing:0.268px;">Vollbild</span>
<span class="t" style="left:601.20px;top:384.60px;font-size:11.5px;line-height:16px;color:#000;letter-spacing:0.148px;">Vorwarnungen:</span>
<span class="t" style="left:714.40px;top:384.60px;font-size:11.5px;line-height:16px;color:#000;letter-spacing:-0.306px;">2</span>
<span class="t" style="left:601.20px;top:403.70px;font-size:11.5px;line-height:16px;color:#000;letter-spacing:0.019px;">Statusmeldungen:</span>
<span class="t" style="left:714.40px;top:403.70px;font-size:11.5px;line-height:16px;color:#000;letter-spacing:-0.306px;">2</span>
<span class="t" style="left:601.20px;top:422.70px;font-size:11.5px;line-height:16px;color:#000;letter-spacing:-0.037px;">Abschlussmeldung:</span>
<span class="t" style="left:714.40px;top:422.70px;font-size:11.5px;line-height:16px;color:#000;letter-spacing:0.106px;">Ja</span>
<span class="t" style="left:601.20px;top:441.70px;font-size:11.5px;line-height:16px;color:#000;letter-spacing:-0.140px;word-spacing:0.140px;">E-Mail Empfänger:</span>
<span class="t" style="left:714.40px;top:441.70px;font-size:11.5px;line-height:16px;color:#000;letter-spacing:-0.306px;">0</span>
<span class="t" style="left:601.20px;top:468.60px;font-size:12.3px;line-height:17px;color:#000;font-weight:bold;letter-spacing:-0.379px;">Einschränkungen</span>
<span class="t" style="left:601.20px;top:490.00px;font-size:11.5px;line-height:16px;color:#000;letter-spacing:0.172px;">Anwendungen:</span>
<span class="t" style="left:714.40px;top:490.00px;font-size:11.5px;line-height:16px;color:#000;letter-spacing:-0.306px;">5</span>
<span class="t" style="left:601.20px;top:509.00px;font-size:11.5px;line-height:16px;color:#000;letter-spacing:-0.147px;">Netzwerk:</span>
<span class="t" style="left:714.40px;top:509.00px;font-size:11.5px;line-height:16px;color:#000;letter-spacing:-0.306px;">2</span>
<span class="t" style="left:601.20px;top:527.60px;font-size:11.5px;line-height:16px;color:#000;letter-spacing:0.059px;">Objekte:</span>
<span class="t" style="left:714.40px;top:527.60px;font-size:11.5px;line-height:16px;color:#000;letter-spacing:-0.306px;">1</span>
<span class="t" style="left:601.20px;top:546.50px;font-size:11.5px;line-height:16px;color:#000;letter-spacing:0.217px;">Attribute:</span>
<span class="t" style="left:714.40px;top:546.50px;font-size:11.5px;line-height:16px;color:#000;letter-spacing:-0.306px;">1</span>
<div class="b" style="left:202px;top:593px;line-height:0;"><svg width="16" height="16" viewBox="0 0 16 16">
<defs><linearGradient id="hg" x1="0" y1="0" x2="0" y2="1"><stop offset="0" stop-color="#8db4e6"/><stop offset="1" stop-color="#2c62b4"/></linearGradient></defs>
<circle cx="8" cy="8" r="6.7" fill="#ffffff" stroke="#9fc0ee" stroke-width="1"/>
<circle cx="8" cy="8" r="5.3" fill="url(#hg)"/>
<text x="8" y="11.6" font-family="Liberation Sans, sans-serif" font-weight="bold" font-size="9.5" fill="#ffffff" text-anchor="middle">?</text>
</svg></div>
<span class="t" style="left:221.90px;top:593.00px;font-size:11.5px;line-height:16px;color:#3399ff;letter-spacing:0.017px;">Hilfe</span>
<div class="b" style="left:592px;top:589px;width:89px;height:21px;background:#cccccc;border:1px solid #bfbfbf;box-sizing:border-box;"></div>
<span class="t" style="left:617.80px;top:591.80px;font-size:11.5px;line-height:16px;color:#838383;letter-spacing:-0.026px;">Zurück</span>
<div class="b" style="left:690px;top:589px;width:111px;height:21px;background:#e1e1e1;border:2px solid #0078d7;box-sizing:border-box;"></div>
<span class="t" style="left:728.00px;top:591.80px;font-size:11.5px;line-height:16px;color:#000;letter-spacing:0.228px;">Weiter</span>
<div class="b" style="left:810px;top:589px;width:73px;height:21px;background:#e1e1e1;border:1px solid #adadad;box-sizing:border-box;"></div>
<span class="t" style="left:818.20px;top:591.80px;font-size:11.5px;line-height:16px;color:#000;letter-spacing:-0.003px;">Abbrechen</span>
</body></html>
